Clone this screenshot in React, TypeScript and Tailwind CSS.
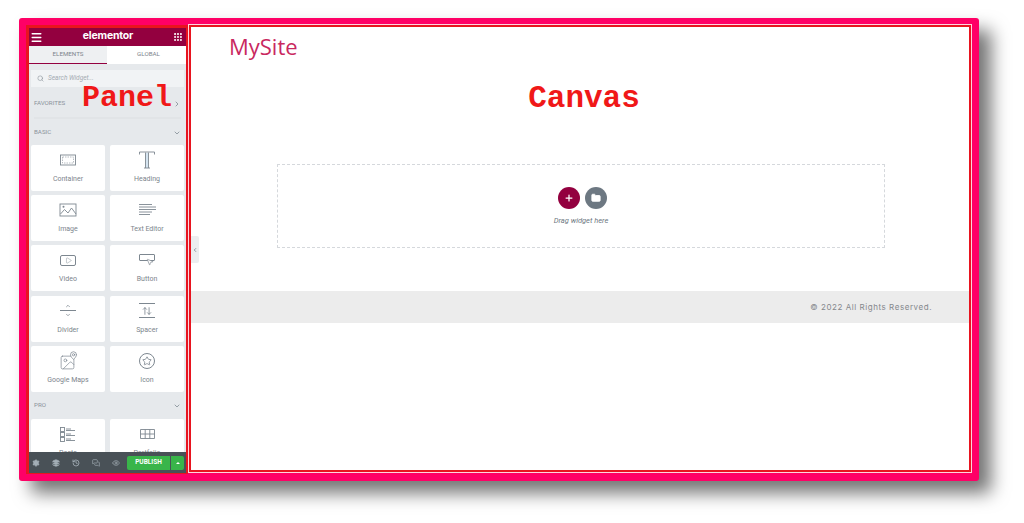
import { ChevronDown, ChevronRight, ChevronLeft, Search, Menu, Grip, Settings, Layers, History, Eye, Plus, Folder, Play, MousePointer2, Star, ChevronUp, MapPin, Image as ImageIcon, MessagesSquare, ArrowUpDown } from "lucide-react";
import type { ReactNode } from "react";

const stroke = { stroke: "#7d8790", fill: "none", strokeWidth: 0.9 };

const widgets: { label: string; icon: ReactNode }[] = [
    {
        label: "Container",
        icon: (
            <svg width="18" height="14" viewBox="0 0 18 14">
                <rect x="1.5" y="2" width="15" height="10" {...stroke} />
                <rect x="3.5" y="4" width="11" height="6" stroke="#a4abb2" fill="none" strokeWidth="0.8" strokeDasharray="1.5 1" />
            </svg>
        ),
    },
    {
        label: "Heading",
        icon: (
            <svg width="18" height="18" viewBox="0 0 18 18">
                <path d="M8 2h2v15H8z" fill="#d5e4f0" />
                <path d="M1.5 3.5V1h15v2.5M7.5 1.5V17M10.5 1.5V17M6 17h6" {...stroke} />
            </svg>
        ),
    },
    {
        label: "Image",
        icon: (
            <svg width="18" height="14" viewBox="0 0 18 14">
                <rect x="1" y="1" width="16" height="12" {...stroke} />
                <path d="M1.500 11l4-4.500 3.500 3.500 3.500-5 4.500 6" {...stroke} />
                <circle cx="4.500" cy="3.800" r="1" fill="#7d8790" />
            </svg>
        ),
    },
    {
        label: "Text Editor",
        icon: (
            <svg width="18" height="14" viewBox="0 0 18 14">
                <path d="M1 1.500h13M1 4h17M1 6.500h17M1 9h13M1 11.500h11" {...stroke} />
            </svg>
        ),
    },
    {
        label: "Video",
        icon: <div className="flex h-[11px] w-[16px] items-center justify-center rounded-[2px] border border-[#7d8790]"><Play size={7} color="#7d8790" strokeWidth={1.5} /></div>,
    },
    {
        label: "Button",
        icon: (
            <div className="relative h-[13px] w-[16px]">
                <div className="h-[7px] w-[16px] rounded-[1px] border border-[#7d8790]" />
                <MousePointer2 size={8} color="#7d8790" className="absolute left-[7px] top-[4px]" fill="#fff" />
            </div>
        ),
    },
    {
        label: "Divider",
        icon: (
            <div className="flex h-[15px] flex-col items-center justify-between">
                <ChevronUp size={6} color="#7d8790" strokeWidth={3} />
                <div className="h-px w-[16px] bg-[#7d8790]" />
                <ChevronDown size={6} color="#7d8790" strokeWidth={3} />
            </div>
        ),
    },
    {
        label: "Spacer",
        icon: (
            <div className="flex h-[15px] w-[16px] flex-col items-center justify-between border-y border-[#7d8790]">
                <ArrowUpDown size={10} color="#7d8790" className="my-auto" />
            </div>
        ),
    },
    {
        label: "Google Maps",
        icon: (
            <div className="relative h-[17px] w-[16px]">
                <ImageIcon size={17} color="#7d8790" strokeWidth={1} className="absolute left-[-1px] top-[1px]" />
                <MapPin size={9} color="#7d8790" fill="#fff" className="absolute right-[-2px] top-[-2px]" />
            </div>
        ),
    },
    {
        label: "Icon",
        icon: <div className="flex h-[16px] w-[16px] items-center justify-center rounded-full border border-[#7d8790]"><Star size={10} color="#7d8790" /></div>,
    },
];

const proIcons: ReactNode[] = [
    <svg width="16" height="15" viewBox="0 0 16 15">
        <rect x="0.500" y="0.500" width="4" height="4" {...stroke} />
        <rect x="0.500" y="5.500" width="4" height="4" {...stroke} />
        <rect x="0.500" y="10.500" width="4" height="4" {...stroke} />
        <path d="M6 2h5M6 3.500h9M6 7h5M6 8.500h9M6 12h5M6 13.500h9" {...stroke} />
    </svg>,
    <svg width="15" height="10" viewBox="0 0 15 10">
        <path d="M.5.500h14v9H.5zM.5 5h14M5.200.500v9M9.800.500v9" {...stroke} />
    </svg>,
];

function SectionTitle({ title, open = true }: { title: string; open?: boolean }) {
    return (
        <div className="flex items-center justify-between pl-[3px] pr-[3px]">
            <span className="text-[6.2px] text-[#8a929a]">{title}</span>
            {open ? <ChevronDown size={8} color="#6d7882" /> : <ChevronRight size={8} color="#6d7882" />}
        </div>
    );
}

function Card({ label, icon }: { label: string; icon: ReactNode }) {
    return (
        <div className="flex h-[46px] flex-col items-center rounded-[2px] bg-white">
            <div className="flex h-[30px] items-center justify-center">{icon}</div>
            <span className="text-[7px] leading-[9px] text-[#7d858c]">{label}</span>
        </div>
    );
}

function Panel() {
    return (
        <div className="relative mt-[1px] h-[449px] w-[162px] shrink-0 bg-[#e8141f] pb-px pl-[3px] pr-[2px] pt-[3px] font-['Roboto',sans-serif]">
            <div className="flex h-full flex-col overflow-hidden bg-[#e6e9ec]">
                {/* header */}
                <div className="flex h-[18px] shrink-0 items-center justify-between bg-[#93003f] pl-[1px] pr-[3px] text-white">
                    <Menu size={13} strokeWidth={2.5} />
                    <span className="pb-[2px] font-['Inter',sans-serif] text-[10.500px] font-bold tracking-[-0.2px]">elementor</span>
                    <Grip size={10} strokeWidth={3} />
                </div>
                {/* tabs */}
                <div className="flex h-[18px] shrink-0 text-[6.2px] text-[#7d858c]">
                    <div className="flex w-[78px] items-center justify-center border-b border-[#93003f] bg-[#eef0f2]">ELEMENTS</div>
                    <div className="flex flex-1 items-center justify-center bg-white pl-[4px]">GLOBAL</div>
                </div>
                <div className="min-h-0 flex-1 overflow-hidden px-[2px] pt-[6px]">
                    <div className="flex h-[17px] items-center gap-[4px] bg-[#f1f3f5] px-[6px]">
                        <Search size={7} color="#8a929a" strokeWidth={2} />
                        <span className="text-[6.5px] italic text-[#a4abb2]">Search Widget...</span>
                    </div>
                    <div className="mt-[12px]"><SectionTitle title="FAVORITES" open={false} /></div>
                    <div className="mx-[3px] mt-[9px] h-[2px] bg-[#e1e4e7]" />
                    <div className="mt-[9px]"><SectionTitle title="BASIC" /></div>
                    <div className="mt-[7px] grid grid-cols-2 gap-x-[5px] gap-y-[4.400px]">
                        {widgets.map((w) => (
                            <Card key={w.label} label={w.label} icon={w.icon} />
                        ))}
                    </div>
                    <div className="mt-[9px]"><SectionTitle title="PRO" /></div>
                    <div className="mt-[9px] grid grid-cols-2 gap-x-[5px]">
                        <Card label="Posts" icon={proIcons[0]} />
                        <Card label="Portfolio" icon={proIcons[1]} />
                    </div>
                </div>
                {/* footer */}
                <div className="flex h-[21px] shrink-0 items-center bg-[#495157] pl-[3px] pr-[2px] text-[#a4afb7]">
                    <div className="flex w-[95px] items-center gap-[12px]">
                        <Settings size={8} fill="#a4afb7" />
                        <Layers size={8} fill="#a4afb7" />
                        <History size={8} strokeWidth={2.5} />
                        <MessagesSquare size={8} />
                        <Eye size={8} />
                    </div>
                    <div className="flex h-[14px] w-[43px] items-center justify-center rounded-l-[2px] bg-[#39b54a] text-[6.500px] font-bold text-white">PUBLISH</div>
                    <div className="ml-px flex h-[14px] w-[13px] items-center justify-center rounded-r-[2px] bg-[#39b54a]">
                        <div className="h-0 w-0 border-x-[2px] border-b-[2px] border-x-transparent border-b-white" />
                    </div>
                </div>
            </div>
            <span className="absolute left-[56px] top-[58px] font-['Liberation_Mono',monospace] text-[30px] font-bold leading-[30px] text-[#f01818]">Panel</span>
        </div>
    );
}

function Canvas() {
    return (
        <div className="h-[449px] w-[784px] shrink-0 bg-[#ffd5de] p-px font-['Roboto',sans-serif]">
            <div className="h-full bg-[#e8141f] p-[2px]">
                <div className="relative flex h-full flex-col bg-white">
                    <div className="pl-[38px] pt-[3px] font-['Open_Sans',sans-serif] text-[22px] font-medium leading-[32px] text-[#c9285f]">MySite</div>
                    <div className="mt-[20px] pl-[8px] text-center font-['Liberation_Mono',monospace] text-[31px] font-bold leading-[34px] text-[#f01818]">Canvas</div>
                    <div className="ml-[86px] mt-[48px] flex h-[84px] w-[608px] flex-col items-center border border-dashed border-[#d5d8dc] pt-[22px]">
                        <div className="ml-[3px] flex gap-[5px]">
                            <div className="flex h-[22px] w-[22px] items-center justify-center rounded-full bg-[#93003f]"><Plus size={10} color="#fff" strokeWidth={3} /></div>
                            <div className="flex h-[22px] w-[22px] items-center justify-center rounded-full bg-[#6d7882]"><Folder size={10} color="#fff" fill="#fff" /></div>
                        </div>
                        <span className="mt-[6px] text-[7.500px] italic text-[#6d7882]">Drag widget here</span>
                    </div>
                    <div className="mt-[43px] flex h-[32px] items-center justify-end bg-[#ececec] pr-[37px]">
                        <span className="font-['Inter',sans-serif] text-[8px] tracking-[0.55px] text-[#85888c]">© 2022 All Rights Reserved.</span>
                    </div>
                    {/* collapse handle */}
                    <div className="absolute left-0 top-[209px] flex h-[27px] w-[8px] items-center justify-center rounded-r-[2px] bg-[#eceef0]">
                        <ChevronLeft size={6} color="#6d7882" strokeWidth={3} />
                    </div>
                </div>
            </div>
        </div>
    );
}

export default function App() {
    return (
        <div className="h-[523px] w-[1024px] overflow-hidden bg-white pl-[19px] pt-[18px]">
            <div className="flex h-[463px] w-[960px] items-start rounded-[3px] bg-[#ff0066] pl-[7px] pt-[6px] shadow-[12px_12px_18px_rgba(0,0,0,0.55)]">
                <Panel />
                <Canvas />
            </div>
        </div>
    );
}
